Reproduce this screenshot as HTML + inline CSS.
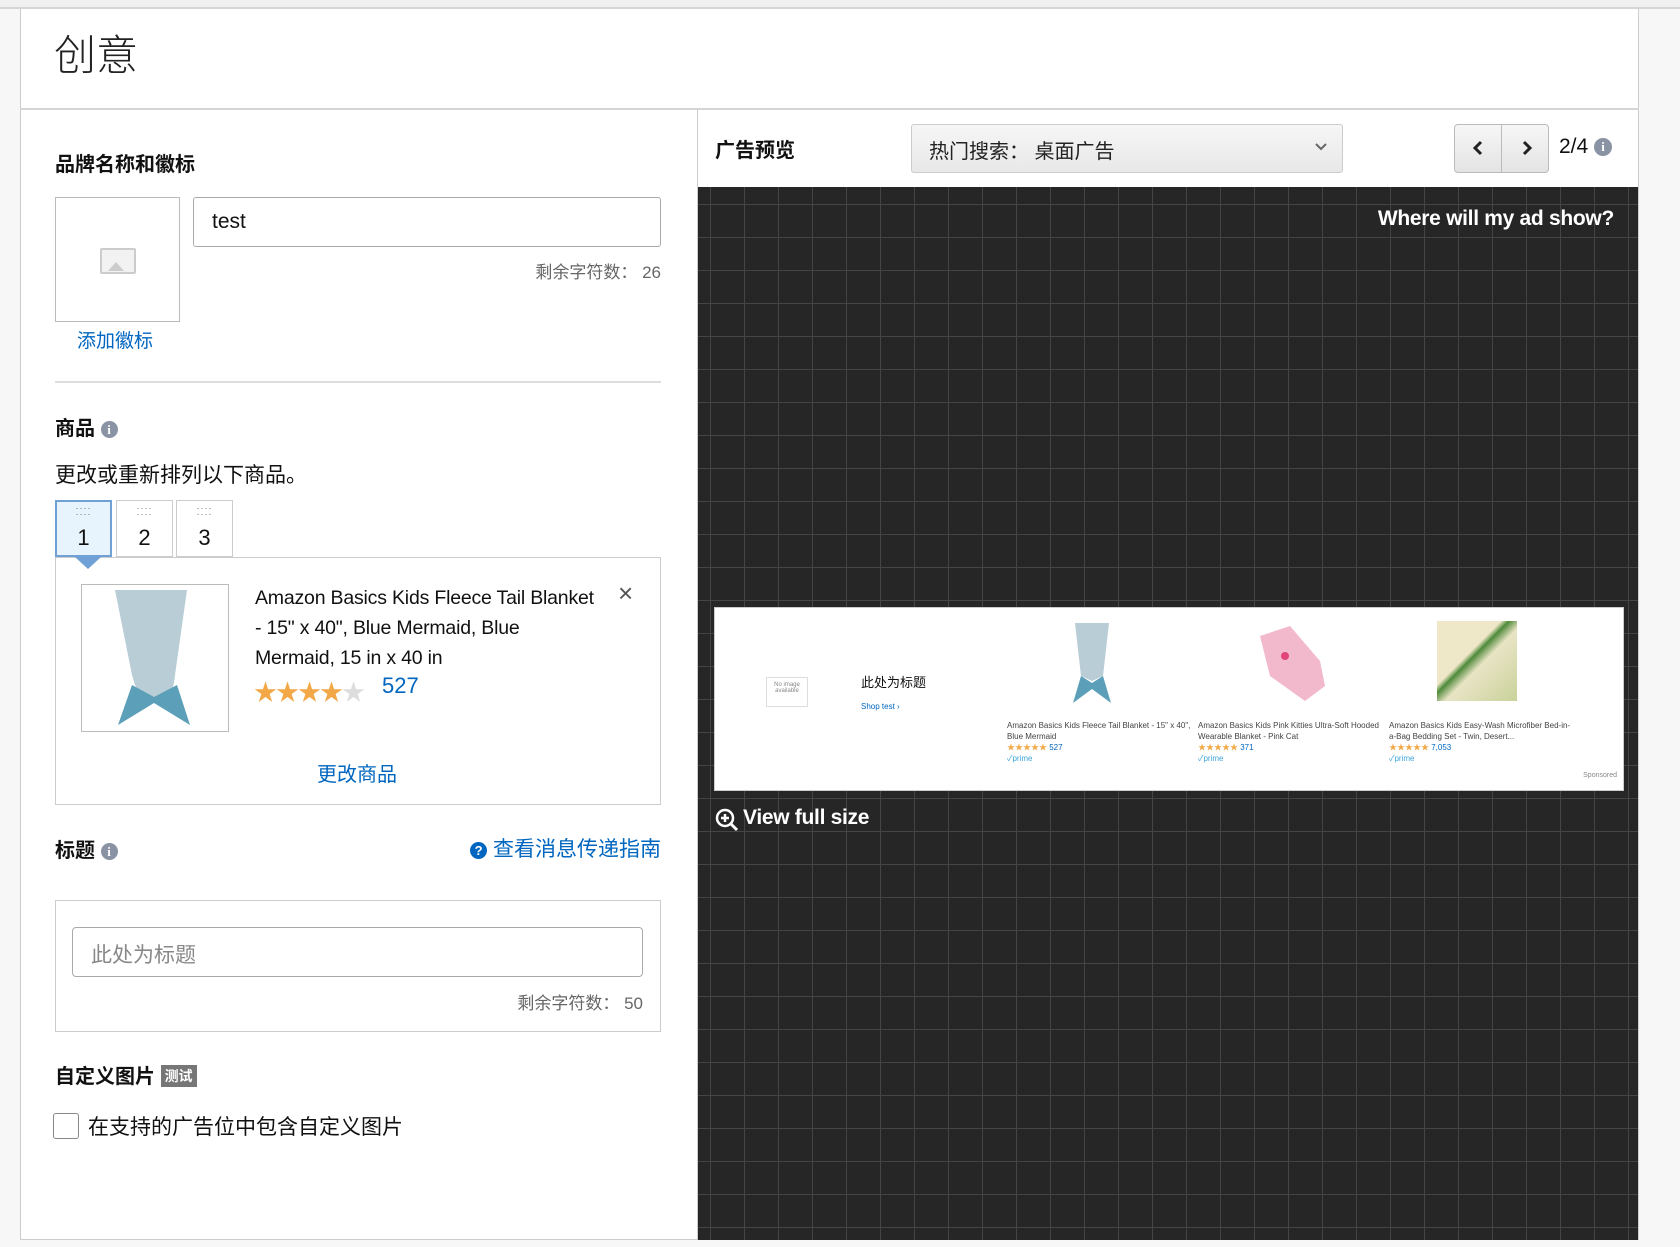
<!DOCTYPE html>
<html><head><meta charset="utf-8">
<style>
*{box-sizing:border-box;margin:0;padding:0}
body{width:1680px;height:1247px;background:#fff;position:relative;overflow:hidden;font-family:"Liberation Sans","Noto Sans CJK SC",sans-serif;color:#111}
.a{position:absolute}
.cn{font-family:"Liberation Sans","Noto Sans CJK SC",sans-serif}
.info{display:inline-block;width:17px;height:17px;border-radius:50%;background:#8a93a3;color:#fff;font-size:13px;font-weight:bold;text-align:center;line-height:17px;font-family:"Liberation Serif",serif;vertical-align:middle}
.lbl{font-size:20px;font-weight:bold;color:#111}
.gray{color:#666;font-size:17px}
.blue{color:#0066c0}
</style></head><body>
<div class="a" style="left:0;top:0;width:1680px;height:9px;background:#f0f0f0;border-bottom:2px solid #d5d5d5"></div>
<div class="a" style="left:0;top:9px;width:20px;height:1238px;background:#f7f7f7"></div>
<div class="a" style="left:1638px;top:9px;width:42px;height:1238px;background:#f7f7f7"></div>
<div class="a" style="left:20px;top:9px;width:1619px;height:1231px;border:1px solid #ccc;border-top:none"></div>
<div class="a" style="left:0;top:1240px;width:1680px;height:7px;background:#f7f7f7"></div>
<div class="a cn" style="left:54px;top:22px;font-size:42px;color:#222;font-weight:300">创意</div>
<div class="a" style="left:20px;top:108px;width:1619px;height:2px;background:#d5d5d5"></div>

<!-- left -->
<div class="a lbl" style="left:55px;top:148px">品牌名称和徽标</div>
<div class="a" style="left:55px;top:197px;width:125px;height:125px;border:1px solid #bbb">
<div class="a" style="left:44px;top:50px;width:36px;height:26px;border:2px solid #ccc;border-radius:2px;background:#f2f2f2"><div class="a" style="left:6px;top:12px;width:0;height:0;border-left:8px solid transparent;border-right:8px solid transparent;border-bottom:9px solid #ccc"></div></div></div>
<div class="a" style="left:193px;top:197px;width:468px;height:50px;border:1px solid #aaa;border-radius:3px;font-size:21px;padding:12px 18px;color:#111">test</div>
<div class="a gray" style="right:1019px;top:258px">剩余字符数：&nbsp;26</div>
<div class="a blue" style="left:77px;top:326px;font-size:19px">添加徽标</div>
<div class="a" style="left:55px;top:381px;width:606px;height:2px;background:#ddd"></div>
<div class="a lbl" style="left:55px;top:412px">商品 <span class="info">i</span></div>
<div class="a" style="left:55px;top:459px;font-size:21px;color:#111">更改或重新排列以下商品。</div>
<div class="a" style="left:55px;top:500px;width:57px;height:57px;border:2px solid #6fa0d6;background:#e8f4fd;text-align:center"><div style="font-size:9px;color:#666;line-height:6px;letter-spacing:1px;margin-top:3px">····<br>····</div><div style="font-size:22px;margin-top:8px">1</div></div>
<div class="a" style="left:75px;top:557px;width:0;height:0;border-left:13px solid transparent;border-right:13px solid transparent;border-top:12px solid #6fa0d6;z-index:2"></div>
<div class="a" style="left:116px;top:500px;width:57px;height:57px;border:1px solid #ccc;text-align:center"><div style="font-size:9px;color:#666;line-height:6px;letter-spacing:1px;margin-top:4px">····<br>····</div><div style="font-size:22px;margin-top:8px">2</div></div>
<div class="a" style="left:176px;top:500px;width:57px;height:57px;border:1px solid #ccc;text-align:center"><div style="font-size:9px;color:#666;line-height:6px;letter-spacing:1px;margin-top:4px">····<br>····</div><div style="font-size:22px;margin-top:8px">3</div></div>
<div class="a" style="left:55px;top:557px;width:606px;height:248px;border:1px solid #ccc"></div>
<div class="a" style="left:81px;top:584px;width:148px;height:148px;border:1px solid #bbb;background:#fff">
<svg width="146" height="146" viewBox="0 0 146 146"><path d="M33 5 L105 5 L93 90 Q92 100 90 105 L72 115 L55 105 Q52 98 50 90 Z" fill="#b9cdd6"/><path d="M50 100 L36 140 L72 118 L108 140 L95 100 L72 112 Z" fill="#5b9fb8"/></svg></div>
<div class="a" style="left:255px;top:583px;font-size:19.5px;line-height:30px;color:#111;letter-spacing:-0.2px;white-space:nowrap">Amazon Basics Kids Fleece Tail Blanket<br>- 15" x 40", Blue Mermaid, Blue<br>Mermaid, 15 in x 40 in</div>
<div class="a" style="left:618px;top:578px;font-size:26px;color:#555">×</div>
<div class="a" style="left:254px;top:673px;font-size:23px;color:#f3a847;letter-spacing:-1px">★★★★<span style="color:#ddd">★</span></div>
<div class="a blue" style="left:382px;top:673px;font-size:22px">527</div>
<div class="a blue" style="left:317px;top:758px;font-size:20px">更改商品</div>
<div class="a lbl" style="left:55px;top:834px">标题 <span class="info">i</span></div>
<div class="a blue" style="right:1019px;top:833px;font-size:21px"><span style="display:inline-block;width:17px;height:17px;border-radius:50%;background:#0066c0;color:#fff;font-size:13px;text-align:center;line-height:17px;font-weight:bold;vertical-align:middle">?</span> 查看消息传递指南</div>
<div class="a" style="left:55px;top:900px;width:606px;height:132px;border:1px solid #ccc"></div>
<div class="a" style="left:72px;top:927px;width:571px;height:50px;border:1px solid #aaa;border-radius:4px;font-size:21px;padding:11px 18px;color:#888">此处为标题</div>
<div class="a gray" style="right:1037px;top:989px">剩余字符数：&nbsp;50</div>
<div class="a lbl" style="left:55px;top:1060px">自定义图片 <span style="display:inline-block;background:#767676;color:#fff;font-size:14px;padding:1px 4px;vertical-align:2px">测试</span></div>
<div class="a" style="left:53px;top:1113px;width:26px;height:26px;border:1.5px solid #888;border-radius:3px"></div>
<div class="a" style="left:88px;top:1111px;font-size:21px;color:#111">在支持的广告位中包含自定义图片</div>

<!-- right -->
<div class="a" style="left:697px;top:109px;width:1px;height:1131px;background:#ccc"></div>
<div class="a lbl" style="left:715px;top:134px">广告预览</div>
<div class="a" style="left:911px;top:124px;width:432px;height:49px;border:1px solid #ccc;border-radius:3px;background:linear-gradient(#f6f6f6,#e8e8e8);font-size:20px;padding:10px 17px;color:#222">热门搜索：&nbsp;桌面广告<svg style="position:absolute;right:14px;top:17px" width="14" height="10"><path d="M2 2 L7 7 L12 2" stroke="#666" stroke-width="2" fill="none"/></svg></div>
<div class="a" style="left:1454px;top:124px;width:95px;height:49px;border:1px solid #bbb;border-radius:4px;background:linear-gradient(#f6f6f6,#e4e4e4)"><div class="a" style="left:46px;top:0;width:1px;height:47px;background:#bbb"></div>
<svg class="a" style="left:0;top:0" width="93" height="47"><path d="M26 17 L20 23 L26 29" stroke="#222" stroke-width="3" fill="none"/><path d="M69 17 L75 23 L69 29" stroke="#222" stroke-width="3" fill="none"/></svg></div>
<div class="a" style="left:1559px;top:135px;font-size:21px;color:#111">2/4 <span class="info" style="width:18px;height:18px">i</span></div>
<div class="a" style="left:698px;top:187px;width:940px;height:1053px;background-color:#262626;background-image:linear-gradient(90deg,#454545 1px,transparent 1px),linear-gradient(#454545 1px,transparent 1px);background-size:34px 33px;background-position:12px 17px"></div>
<div class="a" style="right:66px;top:207px;font-size:21px;font-weight:bold;color:#fff;letter-spacing:-0.3px">Where will my ad show?</div>
<div class="a" style="left:714px;top:607px;width:910px;height:184px;background:#fff;border:1px solid #ccc">
 <div class="a" style="left:51px;top:69px;width:42px;height:30px;border:1px solid #ddd;font-size:6px;color:#888;text-align:center;padding-top:4px">No image<br>available</div>
 <div class="a" style="left:146px;top:64px;font-size:13px;color:#111">此处为标题</div>
 <div class="a" style="left:146px;top:94px;font-size:8px;color:#0066c0">Shop test ›</div>
 <svg class="a" style="left:352px;top:13px" width="50" height="85"><path d="M8 2 L42 2 L36 55 L25 60 L14 55 Z" fill="#b9cdd6"/><path d="M14 55 L6 82 L25 68 L44 82 L36 55 L25 62 Z" fill="#5b9fb8"/></svg>
 <svg class="a" style="left:525px;top:13px" width="100" height="85"><path d="M20 15 L50 5 L80 40 L85 65 L65 80 L30 55 Z" fill="#f2b8cc"/><circle cx="45" cy="35" r="4" fill="#e0457b"/></svg>
 <div class="a" style="left:722px;top:13px;width:80px;height:80px;background:linear-gradient(135deg,#eee7c8 40%,#4f8a3a 45%,#e8e4c4 55%,#c9d29a)"></div>
 <div class="a" style="left:292px;top:112px;width:185px;font-size:8px;color:#444;line-height:11px">Amazon Basics Kids Fleece Tail Blanket - 15" x 40", Blue Mermaid<br><span style="color:#f3a847">★★★★★</span> <span style="color:#0066c0">527</span><br><span style="color:#3ca5d9">✓prime</span></div>
 <div class="a" style="left:483px;top:112px;width:185px;font-size:8px;color:#444;line-height:11px">Amazon Basics Kids Pink Kitties Ultra-Soft Hooded Wearable Blanket - Pink Cat<br><span style="color:#f3a847">★★★★★</span> <span style="color:#0066c0">371</span><br><span style="color:#3ca5d9">✓prime</span></div>
 <div class="a" style="left:674px;top:112px;width:185px;font-size:8px;color:#444;line-height:11px">Amazon Basics Kids Easy-Wash Microfiber Bed-in-a-Bag Bedding Set - Twin, Desert...<br><span style="color:#f3a847">★★★★★</span> <span style="color:#0066c0">7,053</span><br><span style="color:#3ca5d9">✓prime</span></div>
 <div class="a" style="right:6px;top:164px;font-size:7px;color:#888">Sponsored</div>
</div>
<svg class="a" style="left:714px;top:807px" width="26" height="26"><circle cx="11" cy="11" r="8" stroke="#fff" stroke-width="2.5" fill="none"/><path d="M7 11 H15 M11 7 V15" stroke="#fff" stroke-width="2.5"/><path d="M17 17 L23 23" stroke="#fff" stroke-width="3"/></svg>
<div class="a" style="left:743px;top:806px;font-size:21px;font-weight:bold;color:#fff;letter-spacing:-0.3px">View full size</div>
</body></html>
